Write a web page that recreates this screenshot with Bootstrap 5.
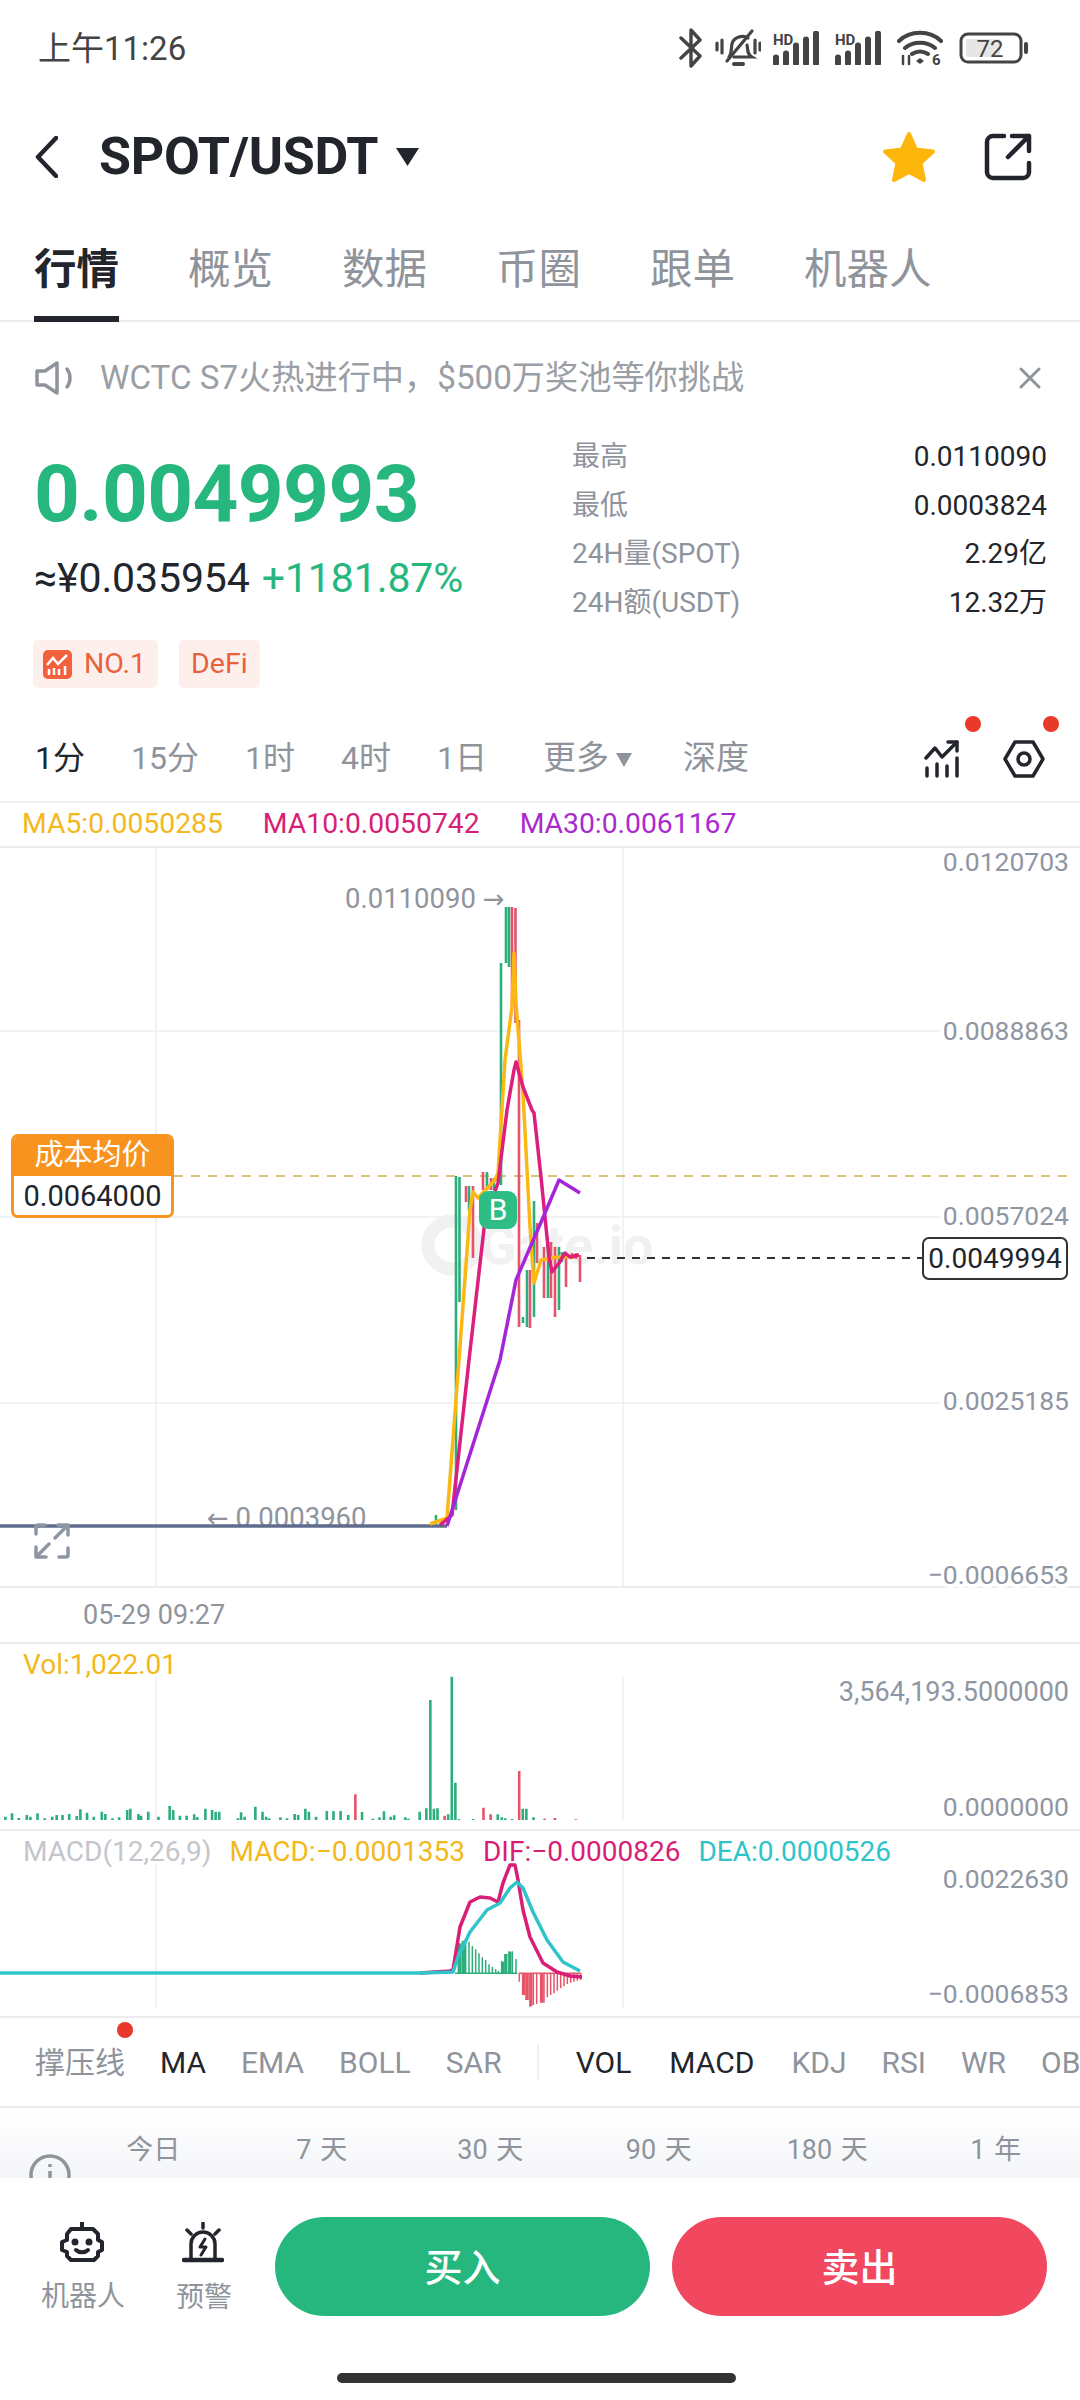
<!DOCTYPE html>
<html lang="zh">
<head>
<meta charset="utf-8">
<title>SPOT/USDT</title>
<link href="https://cdn.jsdelivr.net/npm/bootstrap@5.3.0/dist/css/bootstrap.min.css" rel="stylesheet">
<style>
:root{--ink:#22252b;--mute:#8f949c;--axis:#8f96a3;--line:#ececee;--up:#26b77e;--down:#f1485f;}
html,body{margin:0;background:#fff;}
body{width:1080px;height:2400px;overflow:hidden;font-family:Roboto,"Noto Sans CJK SC",sans-serif;color:var(--ink);}
svg{display:block;}
.st-bar{height:100px;padding:0 51px 4px 38px;}
.st-time{font-size:33px;color:#444;line-height:1;}
.st-wifi{margin-left:3px;}
.st-batt{margin-left:8px;}
.hd{height:114px;padding:0 48px 0 35px;}
.hd-title{font-size:52px;font-weight:700;margin-left:41px;line-height:1;letter-spacing:-.3px;}
.hd-caret{margin-left:18px;}
.tabs{height:108px;padding:0 34px;gap:69px;border-bottom:2px solid var(--line);}
.tab-i{font-size:42.500px;line-height:1;color:var(--mute);height:108px;padding-top:35px;}
.tab-i.on{color:var(--ink);font-weight:700;border-bottom:6px solid var(--ink);}
.ntc{height:111px;padding:0 39px 0 35px;}
.ntc-t{font-size:33.200px;color:#9a9ea5;margin-left:25px;}
.quote{height:257px;padding:0 33px 0 35px;}
.q-left{width:537px;}
.q-price{font-size:80px;font-weight:700;color:var(--up);line-height:122px;letter-spacing:-.6px;margin-left:-1px;}
.q-sub{font-size:41px;line-height:44px;margin-top:1px;letter-spacing:-.1px;margin-left:-1px;}
.q-up{color:var(--up);margin-left:12px;}
.tag-row{margin-top:40px;margin-left:-2px;gap:21px;}
.tag-i{height:48px;background:#fdf0ec;color:#e8613c;font-size:28.500px;border-radius:5px;padding:0 12px;gap:12px;}
.tag-i svg{margin-left:-2px;}
.q-right{width:475px;}
.stat{height:48.500px;font-size:28px;}
.stat-k{color:var(--mute);}
.tf{height:113px;border-bottom:2px solid #f0f0f2;padding:46px 35px 0;gap:46px;font-size:32px;color:var(--mute);}
.tf-i{height:44px;line-height:44px;white-space:nowrap;}
.tf-i.on{color:var(--ink);}
.tf-more{margin-left:10px;font-size:33px;}
.tf-more svg{margin-left:6px;}
.tf-dep{margin-left:4px;font-size:33px;}
.tf-ic{position:relative;margin-top:4px;height:38px;}
.tf-ic2{margin-left:-3px;}
.tf-dot{position:absolute;width:16px;height:16px;border-radius:50%;background:#e8392b;top:-24px;right:-21px;}
.tf-ic2 .tf-dot{right:-14px;}
.ma{height:45px;padding-left:22px;gap:40px;font-size:28.300px;border-bottom:2px solid var(--line);}
.c-y{color:#f3b81c}.c-p{color:#d81e76}.c-v{color:#a92bd0}.c-t{color:#2ec4c9}.c-g{color:#c3c6cc}
.pane{position:relative;}
.p-main{height:740px;border-bottom:2px solid var(--line);}
.p-time{height:56px;border-bottom:2px solid var(--line);font-size:27px;color:var(--mute);padding-left:83px;line-height:55px;}
.p-vol{height:187px;border-bottom:2px solid var(--line);}
.p-macd{height:187px;border-bottom:2px solid var(--line);}
.pane-svg{position:absolute;inset:0;}
.pane-legend{position:absolute;left:23px;top:0;font-size:28px;line-height:42px;gap:18px;white-space:nowrap;}
.ax{font-size:26.500px;fill:var(--axis);text-anchor:end;paint-order:stroke;stroke:#fff;stroke-width:8px;font-family:Roboto,sans-serif;}
.ax-w{font-size:27px;}
.nt{font-size:27.500px;fill:var(--mute);font-family:Roboto,sans-serif;}
.nt-a{font-family:"DejaVu Sans",sans-serif;font-size:26px;}
.wm{font-size:54px;font-weight:700;fill:#f1f1f2;font-family:Roboto,sans-serif;}
.cost{position:absolute;left:11px;top:286px;width:163px;height:84px;border:3px solid #f7931e;border-radius:7px;background:#fff;text-align:center;overflow:hidden;font-size:29px;}
.cost-h{background:#f7931e;color:#fff;height:39px;line-height:37px;}
.cost-v{line-height:40px;}
.bbadge{position:absolute;left:479px;top:343px;width:38px;height:38px;border-radius:9px;background:#2ebd85;color:#fff;font-size:30px;line-height:38px;text-align:center;}
.last{position:absolute;left:922px;top:389px;width:146px;height:43px;border:2px solid #333;border-radius:7px;background:#fff;font-size:28px;line-height:39px;text-align:center;}
.full{position:absolute;left:34px;top:675px;}
.ind{height:90px;border-bottom:2px solid var(--line);padding-left:35px;gap:35px;font-size:30px;color:var(--mute);white-space:nowrap;overflow:hidden;}
.ind-i{position:relative;}
.ind-i.on{color:var(--ink);}
.ind-dot{position:absolute;width:16px;height:16px;border-radius:50%;background:#e8392b;top:-18px;right:-8px;}
.ind-sep{width:2px;height:34px;background:#eeeff1;flex:none;}
.ind-vol{margin-left:2px;}
.ind-macd{margin-left:3px;}
.ind-kdj{margin-left:2px;}
.rng{height:70px;background:linear-gradient(#fff,#f4f5f8);overflow:hidden;}
.rng-ic{width:69px;flex:none;padding:46px 0 0 29px;}
.rng-i{flex:1 1 0;text-align:center;font-size:27px;word-spacing:2px;color:var(--mute);line-height:26px;padding-top:29px;}
.ft{height:222px;background:#fff;}
.ft-row{height:139px;padding:39px 33px 0 41px;}
.ft-i{width:81px;flex:none;font-size:28px;color:var(--mute);line-height:1;white-space:nowrap;}
.ft-i svg{margin:5px auto 21px;}
.ft-i+.ft-i{margin-left:54px;width:54px;}
.btn.act{width:375px;flex:none;height:99px;border:0;color:#fff;font-size:38px;font-weight:500;border-radius:50px;padding:4px 0 0;}
.act-b{background:var(--up);margin-left:45px;}
.act-s{background:var(--down);margin-left:22px;}
.btn.act-b:hover{background:var(--up);}
.btn.act-s:hover{background:var(--down);}
.home{width:399px;height:10px;border-radius:5px;background:#333;margin:56px 0 0 337px;}
</style>
</head>
<body>
<svg width="0" height="0" class="position-absolute">
  <symbol id="sig" viewBox="0 0 50 34">
    <path d="M3 33V27M13 33V23M23 33V15M33 33V9M43 33V3" stroke="#444" stroke-width="6" stroke-linecap="round" fill="none" transform="translate(0,-.5)"/>
  </symbol>
</svg>

<div class="st-bar d-flex align-items-center justify-content-between">
  <div class="st-time">上午11:26</div>
  <div class="d-flex align-items-center gap-2">
    <svg width="24" height="40" viewBox="0 0 24 40" fill="none" stroke="#444" stroke-width="3.400" stroke-linejoin="round" stroke-linecap="round"><path d="M2 10 21 28 12 38V2l9 10L2 30"/></svg>
    <svg width="46" height="40" viewBox="0 0 46 40" fill="none" stroke="#444" stroke-width="3.200" stroke-linecap="round" class="ms-1"><path d="M2 15v7M7 12v13M40 12v13M45 15v7"/><path d="M14 29c3-4 2-9 3-13 1-6 10-10 16-6M32 17c1 5 0 9 5 12H19"/><path d="M12 33 37 3"/><path d="M19 36h9" stroke-width="4"/></svg>
    <svg width="50" height="34" viewBox="0 0 50 34" class="ms-1"><text x="0" y="14" font-size="15" font-weight="700" font-family="Roboto,sans-serif" fill="#444">HD</text><use href="#sig"/></svg>
    <svg width="50" height="34" viewBox="0 0 50 34" class="ms-1"><text x="0" y="14" font-size="15" font-weight="700" font-family="Roboto,sans-serif" fill="#444">HD</text><use href="#sig"/></svg>
    <svg width="46" height="36" viewBox="0 0 46 36" fill="none" stroke="#444" stroke-width="4" stroke-linecap="round" class="ms-1 st-wifi"><path d="M2 11C13 0 33 0 44 11M8 18c8-7 22-7 30 0M15 24c5-3 11-3 16 0"/><path d="M23 28l4 3-4 3-4-3z" fill="#444" stroke="none"/><path d="M6 26v8M12 26v8" stroke-width="2.500"/><text x="35" y="35" font-size="15" font-weight="700" fill="#444" stroke="none" font-family="Roboto,sans-serif">6</text></svg>
    <svg class="st-batt" width="70" height="32" viewBox="0 0 70 32" fill="none"><rect x="2" y="2" width="60" height="28" rx="7" stroke="#444" stroke-width="3"/><rect x="7" y="7" width="34" height="18" rx="2" fill="#e6e6e6"/><text x="31" y="25" font-size="24" fill="#444" text-anchor="middle" font-family="Roboto,sans-serif">72</text><rect x="65" y="10" width="4" height="12" rx="2" fill="#444"/></svg>
  </div>
</div>

<div class="hd d-flex align-items-center">
  <svg width="23" height="42" viewBox="0 0 23 42" fill="none" stroke="#22252b" stroke-width="4.500" stroke-linecap="round" stroke-linejoin="round"><path d="M21 2 3 21l18 19"/></svg>
  <div class="hd-title">SPOT/USDT</div>
  <svg class="hd-caret" width="23" height="18" viewBox="0 0 23 18"><path d="M0 0h23L11.500 18z" fill="#22252b"/></svg>
  <svg class="ms-auto" width="54" height="52" viewBox="0 0 54 52"><path d="M27 3l7 15.500 17 2-12.500 11.500 3.500 17L27 41 12 49l3.500-17L3 20.500l17-2z" fill="#fdb60a" stroke="#fdb60a" stroke-width="4" stroke-linejoin="round"/></svg>
  <svg class="ms-5" width="48" height="48" viewBox="0 0 48 48" fill="none" stroke="#22252b" stroke-width="4.500" stroke-linecap="round" stroke-linejoin="round"><path d="M20 3H9a6 6 0 0 0-6 6v30a6 6 0 0 0 6 6h30a6 6 0 0 0 6-6V30"/><path d="M28 3h17v15M45 3 24 24"/></svg>
</div>

<div class="tabs d-flex nav">
  <div class="tab-i on">行情</div><div class="tab-i">概览</div><div class="tab-i">数据</div><div class="tab-i">币圈</div><div class="tab-i">跟单</div><div class="tab-i">机器人</div>
</div>

<div class="ntc d-flex align-items-center">
  <svg width="40" height="34" viewBox="0 0 40 34" fill="none" stroke="#8f949c" stroke-width="3.500" stroke-linejoin="round" stroke-linecap="round"><path d="M2 10h8L22 2v30L10 24H2z"/><path d="M32 8c4 5 4 13 0 18"/></svg>
  <div class="ntc-t">WCTC S7火热进行中，$500万奖池等你挑战</div>
  <svg class="ms-auto" width="22" height="22" viewBox="0 0 22 22" stroke="#8f949c" stroke-width="3" stroke-linecap="round"><path d="M2 2l18 18M20 2 2 20"/></svg>
</div>

<div class="quote d-flex">
  <div class="q-left">
    <div class="q-price">0.0049993</div>
    <div class="q-sub">≈¥0.035954<span class="q-up">+1181.87%</span></div>
    <div class="tag-row d-flex">
      <div class="tag-i d-flex align-items-center">
        <svg width="29" height="29" viewBox="0 0 29 29"><rect width="29" height="29" rx="5" fill="#f2603c"/><path d="M4 15 10 8l5 6 9-9" fill="none" stroke="#fff" stroke-width="2.500"/><path d="M6 25v-6M11 25v-7M16 25v-6M22 25v-9" stroke="#fff" stroke-width="2.500"/></svg>
        <span>NO.1</span>
      </div>
      <div class="tag-i d-flex align-items-center">DeFi</div>
    </div>
  </div>
  <div class="q-right">
    <div class="stat d-flex justify-content-between align-items-center"><span class="stat-k">最高</span><span>0.0110090</span></div>
    <div class="stat d-flex justify-content-between align-items-center"><span class="stat-k">最低</span><span>0.0003824</span></div>
    <div class="stat d-flex justify-content-between align-items-center"><span class="stat-k">24H量(SPOT)</span><span>2.29亿</span></div>
    <div class="stat d-flex justify-content-between align-items-center"><span class="stat-k">24H额(USDT)</span><span>12.32万</span></div>
  </div>
</div>

<div class="tf d-flex">
  <div class="tf-i on">1分</div><div class="tf-i">15分</div><div class="tf-i">1时</div><div class="tf-i">4时</div><div class="tf-i">1日</div>
  <div class="tf-i tf-more">更多<svg class="d-inline-block align-middle" width="18" height="14" viewBox="0 0 16 14"><path d="M0 0h16L8 14z" fill="#8f949c"/></svg></div>
  <div class="tf-i tf-dep">深度</div>
  <div class="tf-ic ms-auto">
    <svg width="36" height="38" viewBox="0 0 36 38" fill="none" stroke="#22252b" stroke-width="3.500" stroke-linecap="round" stroke-linejoin="round"><path d="M2 18 11 8l7 9L33 2"/><path d="M24 2h9v9"/><path d="M3 36v-8M13 36V24M23 36V26M33 36V18"/></svg>
    <span class="tf-dot"></span>
  </div>
  <div class="tf-ic tf-ic2">
    <svg width="42" height="38" viewBox="0 0 42 38" fill="none" stroke="#22252b" stroke-width="3.500" stroke-linejoin="round"><path d="M12 2h18l10 17-10 17H12L2 19z"/><circle cx="21" cy="19" r="6"/></svg>
    <span class="tf-dot"></span>
  </div>
</div>

<div class="ma d-flex align-items-center">
  <span class="c-y">MA5:0.0050285</span><span class="c-p">MA10:0.0050742</span><span class="c-v">MA30:0.0061167</span>
</div>

<div class="pane p-main">
  <svg class="pane-svg" width="1080" height="740" viewBox="0 848 1080 740">
    <circle cx="452" cy="1245" r="24" fill="none" stroke="#f1f1f2" stroke-width="13"/>
    <text class="wm" x="480" y="1264">Gate.io</text>
    <path d="M156 848V1588M623 848V1588M0 1031H1068M0 1217H1068M0 1403H1068" stroke="#eceef0" stroke-width="1.500"/>
    <path d="M174 1176H1068" stroke="#d9c27c" stroke-width="2" stroke-dasharray="9 8"/>
    <path d="M587 1258H922" stroke="#333" stroke-width="2" stroke-dasharray="8 7"/>
    <text class="ax" x="1069" y="871">0.0120703</text>
    <text class="ax" x="1069" y="1040">0.0088863</text>
    <text class="ax" x="1069" y="1225">0.0057024</text>
    <text class="ax" x="1069" y="1410">0.0025185</text>
    <text class="ax" x="1069" y="1584">−0.0006653</text>
    <text class="nt" x="345" y="908">0.0110090 <tspan class="nt-a">→</tspan></text>
    <text class="nt" x="207" y="1527"><tspan class="nt-a">←</tspan> 0.0003960</text>
    <path d="M456 1176V1510M459.500 1177V1302M469 1186V1211M487 1172V1190M494 1178V1190M499 1172V1182M501 963V1185M506 907V963M509 907V967M523 1317V1323M527 1270V1327M534 1201V1317M548 1242V1298M559 1247V1310M562 1252V1262M436 1515V1524M442 1518V1524" stroke="#2cae7c" stroke-width="2.600" fill="none"/>
    <path d="M466 1186V1202M473 1186V1258M483 1172V1190M491 1178V1190M512 907V1007M515.500 908V1023M519 1020V1327M530 1270V1328M537 1223V1263M544 1247V1298M551 1242V1298M555 1247V1317M566 1255V1287M572 1253V1259M576 1253V1259M580 1255V1282" stroke="#e6546a" stroke-width="2.600" fill="none"/>
    <path d="M0 1526H447" stroke="#5f6c8e" stroke-width="3.500"/>
    <path d="M430 1524 447 1518 459 1360 470 1210 473 1192 478 1198 495 1180 498 1173 505 1060 512 1007 514 953 516 1003 523 1093 530 1227 534 1283 541 1260 558 1257 570 1257 579 1255" fill="none" stroke="#fbb813" stroke-width="3.500" stroke-linejoin="round"/>
    <path d="M440 1525 452 1515 469 1360 485 1220 498 1183 507 1110 514 1070 516 1062 523 1087 532 1110 534 1113 541 1177 549 1257 552 1272 559 1263 565 1253 570 1257 579 1255" fill="none" stroke="#dc1e7c" stroke-width="3.500" stroke-linejoin="round"/>
    <path d="M447 1526 500 1360 516 1280 532 1243 545 1213 559 1180 580 1193" fill="none" stroke="#a426d8" stroke-width="3.500" stroke-linejoin="round"/>
  </svg>
  <div class="cost"><div class="cost-h">成本均价</div><div class="cost-v">0.0064000</div></div>
  <div class="bbadge">B</div>
  <div class="last">0.0049994</div>
  <svg class="full" width="36" height="36" viewBox="0 0 36 36" fill="none" stroke="#8f96a3" stroke-width="3.500" stroke-linecap="round" stroke-linejoin="round"><path d="M2 11V4a2 2 0 0 1 2-2h7M34 25v7a2 2 0 0 1-2 2h-7"/><path d="M21 15 33 3M24 2h10v10M15 21 3 33M2 24v10h10"/></svg>
</div>

<div class="p-time">05-29 09:27</div>

<div class="pane p-vol">
  <svg class="pane-svg" width="1080" height="187" viewBox="0 1644 1080 187">
    <path d="M156 1677V1820M623 1677V1820" stroke="#eceef0" stroke-width="1.500"/>
    <text class="ax ax-w" x="1069" y="1701">3,564,193.5000000</text>
    <text class="ax" x="1069" y="1816">0.0000000</text>
    <g transform="translate(0 1620) scale(.44643 .33333)">
      <path vector-effect="non-scaling-stroke" stroke="#2cae7c" stroke-width="2.600" fill="none" d="M12 600V590M27 600V580M42 600V594M60 600V585M68 600V590M84 600V580M100 600V595M117 600V590M127 600V585M140 600V585M155 600V582M172 600V588M180 600V568M195 600V578M210 600V590M228 600V575M236 600V582M252 600V595M267 600V592M285 600V570M292 600V566M310 600V582M316 600V587M332 600V575M355 600V590M380 600V558M388 600V570M403 600V587M418 600V587M435 600V583M442 600V592M460 600V566M475 600V570M483 600V575M491 600V575M533 600V595M540 600V577M548 600V590M572 600V560M588 600V575M596 600V590M603 600V595M628 600V592M643 600V595M660 600V582M668 600V585M684 600V566M692 600V575M708 600V590M732 600V573M747 600V573M763 600V573M780 600V585M811 600V576M835 600V596M850 600V592M860 600V574M875 600V590M883 600V586M908 600V592M915 600V596M940 600V575M955 600V565M964 600V240M972 600V566M980 600V565M1004 600V583M1012 600V170M1020 600V488M1028 600V597M1060 600V597M1115 600V583M1124 600V592M1132 600V595M1147 600V597M1171 600V566M1179 600V566M1195 600V592"/>
      <path vector-effect="non-scaling-stroke" stroke="#e6546a" stroke-width="2.600" fill="none" d="M796 600V523M996 600V587M1083 600V563M1099 600V583M1163 600V453M1220 600V596M1243 600V594M1290 600V598"/>
    </g>
  </svg>
  <div class="pane-legend d-flex c-y">Vol:1,022.01</div>
</div>

<div class="pane p-macd">
  <svg class="pane-svg" width="1080" height="187" viewBox="0 1831 1080 187">
    <path d="M156 1865V2007M623 1865V2007" stroke="#eceef0" stroke-width="1.500"/>
    <text class="ax" x="1069" y="1888">0.0022630</text>
    <text class="ax" x="1069" y="2003">−0.0006853</text>
    <g transform="translate(420 1860) scale(.33333)">
      <path vector-effect="non-scaling-stroke" fill="none" stroke="#2cae7c" stroke-width="1.500" d="M115 340V255M127 340V243M137 340V240M147 340V245M157 340V258M167 340V268M177 340V280M187 340V292M197 340V300M207 340V313M217 340V320M227 340V327M235 340V332M245 340V303M255 340V282M267 340V274M277 340V274M288 340V297M105 340H292"/>
      <path vector-effect="non-scaling-stroke" fill="none" stroke="#2cae7c" stroke-width="3" d="M120 340V250M131 340V242M248 340V305M258 340V282M270 340V275"/>
      <path vector-effect="non-scaling-stroke" fill="none" stroke="#e6546a" stroke-width="1.500" d="M298 340V365M308 340V405M318 340V420M330 340V440M340 340V435M350 340V432M362 340V428M372 340V428M382 340V412M392 340V405M402 340V400M412 340V392M422 340V385M432 340V378M442 340V372M452 340V368M462 340V365M472 340V362M482 340V360M296 340H484"/>
      <path vector-effect="non-scaling-stroke" fill="none" stroke="#e6546a" stroke-width="3" d="M311 340V405M322 340V420M333 340V438M366 340V428"/>
    </g>
    <path d="M420 1973 450 1971 453 1970 460 1927 470 1902 480 1897 490 1898 498 1902 503 1883 510 1865 515 1865 518 1880 523 1910 530 1937 543 1963 557 1972 570 1976 582 1977" fill="none" stroke="#d81e76" stroke-width="3.500" stroke-linejoin="round"/>
    <path d="M0 1973H420L453 1972 458 1957 470 1932 487 1910 500 1903 510 1888 517 1882 523 1888 533 1912 547 1940 563 1962 580 1971" fill="none" stroke="#2ec4c9" stroke-width="3.500" stroke-linejoin="round"/>
  </svg>
  <div class="pane-legend d-flex"><span class="c-g">MACD(12,26,9)</span><span class="c-y">MACD:−0.0001353</span><span class="c-p">DIF:−0.0000826</span><span class="c-t">DEA:0.0000526</span></div>
</div>

<div class="ind d-flex align-items-center">
  <div class="ind-i">撑压线<span class="ind-dot"></span></div><div class="ind-i on">MA</div><div class="ind-i">EMA</div><div class="ind-i">BOLL</div><div class="ind-i">SAR</div><div class="ind-sep"></div><div class="ind-i on ind-vol">VOL</div><div class="ind-i on ind-macd">MACD</div><div class="ind-i ind-kdj">KDJ</div><div class="ind-i">RSI</div><div class="ind-i">WR</div><div class="ind-i">OBV</div>
</div>

<div class="rng d-flex">
  <div class="rng-ic"><svg width="42" height="42" viewBox="0 0 42 42" fill="none" stroke="#8f949c" stroke-width="3.500"><circle cx="21" cy="21" r="19"/><path d="M21 17v14M21 10v3"/></svg></div>
  <div class="rng-i">今日</div><div class="rng-i">7 天</div><div class="rng-i">30 天</div><div class="rng-i">90 天</div><div class="rng-i">180 天</div><div class="rng-i">1 年</div>
</div>

<div class="ft">
  <div class="ft-row d-flex align-items-start">
    <div class="ft-i text-center">
      <svg width="44" height="40" viewBox="0 0 44 40" fill="none" stroke="#22252b" stroke-width="4" stroke-linejoin="round" stroke-linecap="round"><path d="M22 1v6"/><path d="M11 7h22l5 5v6l4 2v8l-4 2v4l-4 4H11l-4-4v-4l-5-2v-8l5-2v-6z"/><circle cx="15" cy="20" r="1.500" fill="#22252b"/><circle cx="29" cy="20" r="1.500" fill="#22252b"/><path d="M16 28c3 3 9 3 12 0"/></svg>
      机器人
    </div>
    <div class="ft-i text-center">
      <svg width="42" height="41" viewBox="0 0 42 41" fill="none" stroke="#22252b" stroke-width="3.500" stroke-linejoin="round" stroke-linecap="round"><path d="M21 1v5M5 8l4 4M37 8l-4 4"/><path d="M9 36V22a12 12 0 0 1 24 0v14"/><path d="M2 38h38" stroke-width="4.500"/><path d="M23 17l-5 8h6l-5 8" stroke-width="3"/></svg>
      预警
    </div>
    <button type="button" class="btn act act-b">买入</button>
    <button type="button" class="btn act act-s">卖出</button>
  </div>
  <div class="home"></div>
</div>
<script src="https://cdn.jsdelivr.net/npm/bootstrap@5.3.0/dist/js/bootstrap.bundle.min.js"></script>
</body>
</html>
